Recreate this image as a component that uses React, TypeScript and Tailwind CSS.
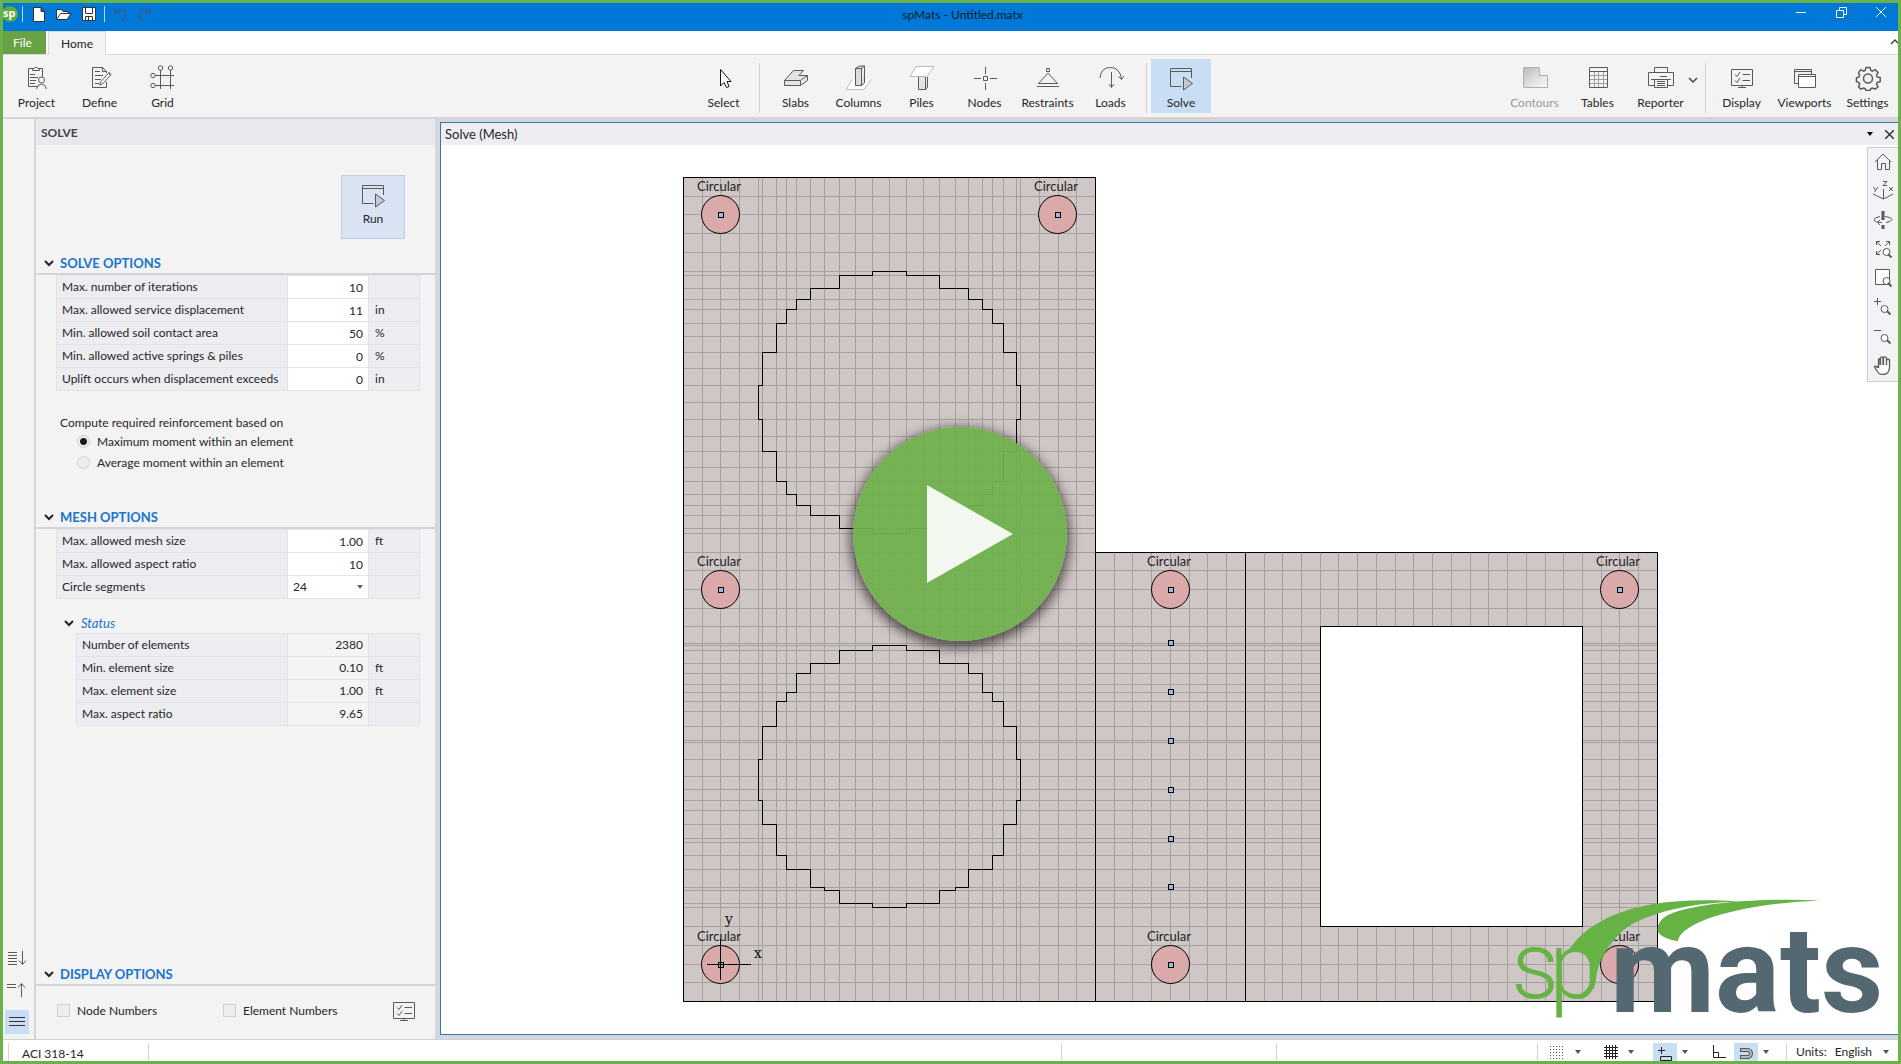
import React from "react";

const xs = [702, 720, 739, 758, 762, 776, 786, 796, 810, 824, 839, 855, 872, 889, 906, 923, 939, 955, 968, 982, 992, 1003, 1016, 1020, 1039, 1058, 1076];
const ysTop = [196, 214, 233, 252, 271, 275, 288, 299, 309, 323, 336, 352, 368, 385, 402, 419, 436, 451, 467, 481, 494, 505, 515, 528, 533, 552];
const ysLow = [570, 589, 608, 626, 643, 645, 650, 663, 673, 684, 692, 701, 711, 726, 740, 742, 759, 776, 789, 800, 810, 824, 838, 842, 855, 869, 887, 890, 903, 907, 926, 945, 964, 982];
const xsRight = Array.from({ length: 29 }, (_, i) => Math.floor(1095.5 + (i + 1) * 18.73));
const columns = [
  [720, 214], [1057, 214], [720, 589], [1170, 589], [1619, 589], [720, 964], [1170, 964], [1619, 964],
];
const nodes = [642, 691, 740, 789, 838, 886];

function MeshCanvas() {
  const grid =
    xs.map((x) => `M${x} 177V1001`).join("") +
    ysTop.map((y) => `M683 ${y}H1095`).join("") +
    ysLow.map((y) => `M683 ${y}H1657`).join("") +
    xsRight.map((x) => `M${x} 552V1001`).join("");
  return (
    <svg viewBox="441 145 1457 889" className="h-full w-full" role="img" aria-label="Mesh view">
      <g transform="translate(.5 .5)" shapeRendering="crispEdges" fill="none" stroke="#000">
        <path d="M683 177H1095V552H1657V1001H683Z" fill="#cfc7c6" stroke="none" />
        <path d={grid} stroke="#a4a09f" />
        <path d="M1320 626H1582V926H1320Z" fill="#fff" />
        <path d="M683 177H1095V552H1657V1001H683Z M1095 552V1001 M1245 552V1001" />
        <path d="M872 271H906V275H939V288H968V299H982V309H992V323H1003V352H1016V385H1020V419H1016V451H1003V481H992V494H982V505H968V515H939V528H906V533H872V528H839V515H810V505H796V494H786V481H776V451H762V419H758V385H762V352H776V323H786V309H796V299H810V288H839V275H872Z" />
        <path d="M872 645H906V650H939V663H968V673H982V692H992V701H1003V726H1016V759H1020V800H1016V824H1003V855H992V869H968V887H955V890H939V903H906V907H872V903H839V890H824V887H810V869H786V855H776V824H762V800H758V759H762V726H776V701H786V692H796V673H810V663H839V650H872Z" />
        {columns.map(([x, y]) => (
          <g key={`${x}-${y}`}>
            <circle cx={x} cy={y} r="19" fill="#d9aaa9" shapeRendering="auto" />
            <rect x={x - 2} y={y - 2} width="5" height="5" fill="#9db9e0" />
          </g>
        ))}
        {nodes.map((y) => (
          <rect key={y} x="1168" y={y - 2} width="5" height="5" fill="#9db9e0" />
        ))}
        <path d="M706 964H750M720 938V979" />
      </g>
      <g className="text-[13px]" fill="#222">
        {columns.map(([x, y]) => (
          <text key={`${x}-${y}`} x={x - 1} y={y - 23} textAnchor="middle">Circular</text>
        ))}
      </g>
      <g className="font-['DejaVu_Serif',serif] text-[14px]" fill="#111">
        <text x="725" y="924">y</text>
        <text x="754" y="958">x</text>
      </g>
    </svg>
  );
}

function Logo() {
  return (
    <svg viewBox="60 0 1170 470" className="h-full w-full" role="img" aria-label="spMats">
      <path fill="#66b245" d="M270 204C330 118 460 58 680 60C715 60 750 61 775 65C650 66 500 95 430 150C375 200 352 250 342 325L329 325V242C327 222 312 210 285 205Z" />
      <path fill="#66b245" d="M1017 62C900 54 690 60 580 98C545 110 531 130 533 153C540 168 565 178 594 183C598 155 640 130 700 110C790 82 900 66 1017 62Z" />
      <g className="font-['Roboto',sans-serif] font-light" fill="#66b245" fontSize="282">
        <text x="94" y="355">s</text>
        <text x="208" y="355">p</text>
      </g>
      <text x="390" y="396" fontSize="364" fill="#546872" className="font-['Roboto',sans-serif] font-bold">mats</text>
    </svg>
  );
}

function Icon({ children, w = 26, h = 26 }: { children: React.ReactNode; w?: number; h?: number }) {
  return (
    <svg width={w} height={h} viewBox={`0 0 ${w} ${h}`} fill="none" stroke="#5a5a5a" strokeWidth="1" aria-hidden="true" className="shrink-0">
      {children}
    </svg>
  );
}

const RunIcon = () => (
  <Icon>
    <path d="M13.500 21.500H2.500V3.500H23.500V13M2.500 6.500H23.500" />
    <path d="M15.500 12L24.500 18.500L15.500 25Z" fill="#c6c8cc" />
  </Icon>
);
const MonitorIcon = () => (
  <Icon>
    <path d="M2.500 4.500H23.500V20.500H2.500ZM13 20.500V22.500M9 22.500H17M13.500 9.500H21M13.500 15.500H21M6 9.500L8 11.500L11 7M6 15.500L8 17.500L11 13" />
  </Icon>
);

const ribbonIcons: Record<string, React.ReactNode> = {
  Project: (
    <Icon>
      <path d="M9 3.500H4.500V21.500H13M15 3.500H18.500V12M8.500 5.500V3.500H10Q12 .5 14 3.500H15.500V5.500ZM6 9.500H11M6 12.500H14M6 15.500H12M6 18.500H11" />
      <circle cx="17.500" cy="15" r="3" />
      <path d="M12.500 24Q13 19.500 17.500 19Q22 19.500 22.500 24" />
    </Icon>
  ),
  Define: (
    <Icon>
      <path d="M19.500 17V22.500H5.500V2.500H15.500L19.500 6.500V8M15.500 2.500V6.500H19.500M8 6.500H13M8 10.500H16M8 14.500H14M8 18.500H12" />
      <path d="M12.500 20L14 16.500L22 7.500L24 9.500L16 18.500ZM22 7.500L23 10" fill="#fff" />
    </Icon>
  ),
  Grid: (
    <Icon>
      <path d="M10.500 5V24M20.500 5V24M5 10.500H24M5 20.500H24" />
      <circle cx="10.500" cy="3" r="2.200" /><circle cx="20.500" cy="3" r="2.200" />
      <circle cx="3" cy="10.500" r="2.200" /><circle cx="3" cy="20.500" r="2.200" />
    </Icon>
  ),
  Select: (
    <Icon>
      <path d="M9.500 4.500V21L13 17.500L15.500 22.500L18 21.500L16 16.500H20Z" fill="#fff" stroke="#111" />
    </Icon>
  ),
  Slabs: (
    <Icon>
      <path d="M1.500 15.500H17.500V20.500H1.500ZM1.500 15.500L10.500 5.500H20.500L16 10.500H24.500L17.500 15.500M24.500 10.500V15.500L17.500 20.500" fill="#e3e3e3" />
    </Icon>
  ),
  Columns: (
    <Icon>
      <path d="M6 14.500L0 24.500H18L25 14.500" fill="#fff" stroke="#bbb" />
      <path d="M9.500 3.500H15.500V20.500H9.500ZM9.500 3.500L13 1H18.500L15.500 3.500M18.500 1V18L15.500 20.500" fill="#dcdcdc" />
    </Icon>
  ),
  Piles: (
    <Icon>
      <path d="M9.500 12V24.500H16.500V12M16.500 24.500L18.500 22V12" fill="#e3e3e3" />
      <path d="M1 11.500L7 1.500H25L18 11.500Z" fill="#fff" stroke="#bbb" />
    </Icon>
  ),
  Nodes: (
    <Icon>
      <path d="M11.500 11.500H15.500V15.500H11.500ZM13.500 2V9M13.500 18V25M2 13.500H9M18 13.500H25" />
    </Icon>
  ),
  Restraints: (
    <Icon>
      <path d="M11.500 3.500H14.500V6.500H11.500ZM13 8L3.500 18.500H22.500ZM2 21.500H24" />
    </Icon>
  ),
  Loads: (
    <Icon>
      <path d="M2 13Q3 2.500 12.500 2.500Q22 2.500 23.500 14M20.500 11.500L23.500 14.500L26 11M13.500 7V22M11 19L13.500 22.500L16 19" />
    </Icon>
  ),
  Solve: <RunIcon />,
  Contours: (
    <Icon>
      <defs>
        <linearGradient id="contour" x1="0" y1="0" x2="1" y2="1">
          <stop offset="0" stopColor="#b8b8b8" /><stop offset=".6" stopColor="#e4e4e4" /><stop offset="1" stopColor="#fafafa" />
        </linearGradient>
      </defs>
      <path d="M1.500 2.500H17.500V10.500H25.500V22.500H1.500Z" fill="url(#contour)" stroke="#b0b0b0" />
    </Icon>
  ),
  Tables: (
    <Icon>
      <path d="M4.500 2.500H22.500V22.500H4.500ZM4.500 6.500H22.500" />
      <path d="M5 10.500H22M5 14.500H22M5 18.500H22M9.500 7V22M13.500 7V22M18.500 7V22" stroke="#a0a0a0" />
    </Icon>
  ),
  Reporter: (
    <Icon>
      <path d="M6.500 7V2.500H19.500V7M6 20.500H.5V7.500H25.500V20.500H20M6.500 14.500H19.500V22.500H6.500ZM3 14.500H23M9 16.500H17M9 18.500H17M9 20.500H17M12 11.500H19" />
    </Icon>
  ),
  Display: <MonitorIcon />,
  Viewports: (
    <Icon>
      <path d="M2.500 4.500H19.500V18.500H2.500ZM2.500 6.500H19.500" fill="#eee" />
      <path d="M6.500 9.500H23.500V22.500H6.500ZM6.500 11.500H23.500" fill="#fff" />
    </Icon>
  ),
  Settings: (
    <Icon>
      <g strokeWidth="1.500">
        <path d="M11 2.500h4l.8 3 1.700.7 2.700-1.500 2.800 2.800-1.500 2.700.7 1.700 3 .8v4l-3 .8-.7 1.700 1.500 2.700-2.800 2.300-2.700-1.200-1.700.7-.8 1.800h-4l-.8-1.800-1.700-.7-2.700 1.200-2.300-2.300 1.200-2.700-.7-1.700-2.500-.8v-4l2.500-.8.7-1.700-1.200-2.700 2.300-2.800 2.700 1.500 1.700-.7z" />
        <circle cx="13" cy="13.500" r="4.500" />
      </g>
    </Icon>
  ),
};

function RibbonButton({ name, active, muted }: { name: string; active?: boolean; muted?: boolean }) {
  const base = "flex h-[54px] flex-col items-center justify-between pt-[6px] pb-px leading-[18px] ";
  const tone = active ? "w-[60px] bg-[#c9def5]" : muted ? "w-[63px] text-[#9b9b9b]" : "w-[63px]";
  return (
    <button className={base + tone}>
      {ribbonIcons[name]}
      <span>{name}</span>
    </button>
  );
}

function Chevron({ dark }: { dark?: boolean }) {
  return (
    <svg width="10" height="8" viewBox="0 0 10 8" fill="none" stroke={dark ? "#222" : "#444"} strokeWidth={dark ? 2 : 1.5} aria-hidden="true">
      <path d="M1 2L5 6L9 2" />
    </svg>
  );
}

function Caret() {
  return (
    <svg width="6" height="4" viewBox="0 0 6 4" fill="currentColor" aria-hidden="true" className="shrink-0"><path d="M0 0H6L3 4Z" /></svg>
  );
}

function SectionHeader({ children }: { children: React.ReactNode }) {
  return (
    <h2 className="border-b-2 border-[#d5d5d7] text-[13px] font-bold text-[#1874cd]">
      <button className="flex h-5 w-full items-center gap-[6px] pl-2">
        <Chevron dark />
        {children}
      </button>
    </h2>
  );
}

type Row = { label: string; value: string; unit?: string; kind?: "select" | "output" };

function OptionTable({ rows, name }: { rows: Row[]; name: string }) {
  return (
    <table className="w-full table-fixed border-separate border-spacing-0 border border-b-0 border-[#e3e3e7] bg-[#ededf1]" aria-label={name}>
      <colgroup>
        <col />
        <col className="w-[81px]" />
        <col className="w-[50px]" />
      </colgroup>
      <tbody>
        {rows.map((r) => {
          const id = r.label.toLowerCase().replace(/[^a-z]+/g, "-");
          return (
            <tr key={r.label} className="h-[23px]">
              <th scope="row" className="border-r border-b border-[#e3e3e7] p-0 pl-[5px] text-left font-normal whitespace-nowrap">
                <label htmlFor={id}>{r.label}</label>
              </th>
              <td className={r.kind === "output" ? "border-r border-b border-[#e3e3e7] bg-[#f4f4f5] p-0" : "border-r border-b border-[#e3e3e7] bg-white p-0"}>
                {r.kind === "output" ? (
                  <output id={id} className="block pr-[5px] text-right">{r.value}</output>
                ) : r.kind === "select" ? (
                  <div className="flex items-center pr-[5px]">
                    <select id={id} defaultValue={r.value} className="h-[22px] w-full appearance-none bg-transparent pl-[5px] outline-none">
                      <option>12</option>
                      <option>24</option>
                      <option>36</option>
                    </select>
                    <span className="text-[#666]"><Caret /></span>
                  </div>
                ) : (
                  <input id={id} defaultValue={r.value} className="block h-[22px] w-full bg-transparent pr-[5px] text-right outline-none" />
                )}
              </td>
              <td className="border-b border-[#e3e3e7] p-0 pl-[6px]">{r.unit}</td>
            </tr>
          );
        })}
      </tbody>
    </table>
  );
}

function TitleBar() {
  return (
    <header className="grid h-7 shrink-0 grid-cols-[1fr_auto_1fr] bg-[#0078d7]">
      <div className="flex items-start pt-px">
        <svg width="150" height="22" viewBox="0 0 150 22" fill="none" aria-hidden="true">
          <circle cx="7" cy="10" r="8" fill="#5cab3b" />
          <text x="0" y="13" fontSize="11" fill="#fff" className="font-['Open_Sans'] font-bold">sp</text>
          <path d="M19.500 2V18M101.500 2V18" stroke="#c9d6e2" />
          <path d="M30.500 3.500H38L41.500 7.500V17.500H30.500ZM38 3.500V7.500H41.500" fill="#fff" stroke="#333" />
          <path d="M53.500 15.500V5.500H58L60 7.500H65V10" fill="#fff" stroke="#333" />
          <path d="M53.500 15.500L57.500 9.500H68L64 15.500Z" fill="#fff" stroke="#333" />
          <path d="M79.500 3.500H92.500V16.500H79.500Z" fill="#fff" stroke="#333" />
          <path d="M82.500 4V9.500H89.500V4M82.500 16V12.500H89.500V16M85.500 13V16" stroke="#333" />
          <path d="M112 4V9H117M112 9Q116 4 120 6Q125 10 119 17" stroke="#2a62a0" strokeWidth="2" />
          <path d="M147 4V9H142M147 9Q143 4 139 6Q134 10 140 17" stroke="#2a62a0" strokeWidth="2" />
        </svg>
      </div>
      <h1 className="pt-[3px] pl-6 text-[12px] leading-[18px] text-[#0b1a2a]">spMats - Untitled.matx</h1>
      <div className="flex justify-end gap-2 pr-px text-white">
        <button aria-label="Minimize" className="flex h-[18px] w-8 items-center justify-center">
          <svg width="10" height="10" stroke="currentColor"><path d="M0 5.500H10" /></svg>
        </button>
        <button aria-label="Restore" className="flex h-[18px] w-8 items-center justify-center">
          <svg width="11" height="11" stroke="currentColor" fill="none"><path d="M.5 3.500H7.500V10.500H.5ZM3.500 3V.5H10.500V7.500H8" /></svg>
        </button>
        <button aria-label="Close" className="flex h-[18px] w-8 items-center justify-center">
          <svg width="10" height="10" stroke="currentColor"><path d="M0 0L10 10M10 0L0 10" /></svg>
        </button>
      </div>
    </header>
  );
}

const Divider = () => <span className="h-[50px] w-px bg-[#d0d0d0]" />;

function Ribbon() {
  return (
    <>
      <nav className="flex h-6 shrink-0 border-b border-[#d9d9d9] bg-white leading-[22px]">
        <button className="h-[23px] w-[43px] bg-[#67a344] pr-1 text-white">File</button>
        <button className="ml-0.5 h-6 w-[58px] border border-b-0 border-[#d9d9d9] bg-[#f3f3f3]">Home</button>
        <button aria-label="Collapse ribbon" className="-mr-1 ml-auto rotate-180 px-0.5"><Chevron /></button>
      </nav>
      <div className="grid h-[62px] shrink-0 grid-cols-[1fr_auto_1fr] bg-[#f3f3f3] pt-1">
        <div className="flex pl-0.5">
          <RibbonButton name="Project" />
          <RibbonButton name="Define" />
          <RibbonButton name="Grid" />
        </div>
        <div className="flex pl-0.5">
          <RibbonButton name="Select" />
          <div className="flex items-center px-1"><Divider /></div>
          <RibbonButton name="Slabs" />
          <RibbonButton name="Columns" />
          <RibbonButton name="Piles" />
          <RibbonButton name="Nodes" />
          <RibbonButton name="Restraints" />
          <RibbonButton name="Loads" />
          <div className="flex items-center px-1"><Divider /></div>
          <RibbonButton name="Solve" active />
        </div>
        <div className="-mr-px flex justify-end">
          <RibbonButton name="Contours" muted />
          <RibbonButton name="Tables" />
          <RibbonButton name="Reporter" />
          <button aria-label="Reporter options" className="-ml-1 pb-4"><Chevron /></button>
          <div className="flex items-center pr-1 pl-[7px]"><Divider /></div>
          <RibbonButton name="Display" />
          <RibbonButton name="Viewports" />
          <RibbonButton name="Settings" />
        </div>
      </div>
    </>
  );
}

function Rail() {
  return (
    <aside className="flex w-[31px] shrink-0 flex-col justify-end gap-2 bg-[#f3f3f3] pb-[5px] pl-0.5">
      <button aria-label="Expand all" className="flex size-6 items-center justify-center">
        <Icon w={20} h={16}><path d="M1 2.500H10M1 5.500H10M1 8.500H10M1 11.500H10M1 14.500H10M15.500 1V14M12 10.500L15.500 14.500L19 10.500" /></Icon>
      </button>
      <button aria-label="Collapse all" className="flex size-6 items-center justify-center">
        <Icon w={20} h={16}><path d="M0 2.500H9M0 5.500H9M14.500 15V2M11 5.500L14.500 1.500L18 5.500" /></Icon>
      </button>
      <button aria-label="List view" className="flex size-6 items-center justify-center bg-[#c9def5]">
        <Icon w={16} h={10}><path d="M0 .5H16M0 4.500H16M0 8.500H16" stroke="#333" /></Icon>
      </button>
    </aside>
  );
}

function SolvePanel() {
  return (
    <section className="flex w-[401px] shrink-0 flex-col border-l-2 border-[#d5d5d7] bg-[#f3f3f3]">
      <h2 className="h-[26px] bg-[#e9e9ed] pl-[5px] leading-[28px] font-bold text-[#444]">SOLVE</h2>
      <button className="mt-[30px] mr-[30px] flex size-16 flex-col items-center gap-0.5 self-end border border-[#c5cbdb] bg-[#dae3f3] pt-[6px]">
        <RunIcon />
        Run
      </button>
      <div className="mt-[14px]">
        <SectionHeader>SOLVE OPTIONS</SectionHeader>
        <div className="pr-[15px] pl-[20px]">
          <OptionTable
            name="Solve options"
            rows={[
              { label: "Max. number of iterations", value: "10" },
              { label: "Max. allowed service displacement", value: "11", unit: "in" },
              { label: "Min. allowed soil contact area", value: "50", unit: "%" },
              { label: "Min. allowed active springs & piles", value: "0", unit: "%" },
              { label: "Uplift occurs when displacement exceeds", value: "0", unit: "in" },
            ]}
          />
        </div>
      </div>
      <fieldset className="mt-[23px] pl-6">
        <legend className="float-left h-[17px] w-full leading-[18px]">Compute required reinforcement based on</legend>
        {["Maximum moment within an element", "Average moment within an element"].map((t, i) => (
          <label key={t} className="flex h-[21px] items-center gap-[7px] pl-[17px]">
            <input
              type="radio"
              name="moment"
              defaultChecked={i === 0}
              className="size-[13px] appearance-none rounded-full border border-[#cfcfd4] bg-[#ededf1] checked:bg-[radial-gradient(circle,#1a1a1a_3px,#ededf1_4px)]"
            />
            {t}
          </label>
        ))}
      </fieldset>
      <div className="mt-[34px]">
        <SectionHeader>MESH OPTIONS</SectionHeader>
        <div className="pr-[15px] pl-[20px]">
          <OptionTable
            name="Mesh options"
            rows={[
              { label: "Max. allowed mesh size", value: "1.00", unit: "ft" },
              { label: "Max. allowed aspect ratio", value: "10" },
              { label: "Circle segments", value: "24", kind: "select" },
            ]}
          />
        </div>
        <h3 className="mt-[13px] text-[13px] text-[#1874cd] italic">
          <button className="flex h-[21px] items-center gap-[7px] pl-7 italic"><Chevron dark />Status</button>
        </h3>
        <div className="pr-[15px] pl-10">
          <OptionTable
            name="Status"
            rows={[
              { label: "Number of elements", value: "2380", kind: "output" },
              { label: "Min. element size", value: "0.10", unit: "ft", kind: "output" },
              { label: "Max. element size", value: "1.00", unit: "ft", kind: "output" },
              { label: "Max. aspect ratio", value: "9.65", kind: "output" },
            ]}
          />
        </div>
      </div>
      <div className="mt-auto">
        <SectionHeader>DISPLAY OPTIONS</SectionHeader>
        <div className="flex h-[53px] items-center pr-[18px] pb-1 pl-[21px]">
          {["Node Numbers", "Element Numbers"].map((t) => (
            <label key={t} className="flex w-[166px] items-center gap-[7px]">
              <input type="checkbox" className="size-[13px] appearance-none border border-[#cfcfd4] bg-[#ededf1] checked:bg-[#0f6fc6]" />
              {t}
            </label>
          ))}
          <button aria-label="Display settings" className="ml-auto"><MonitorIcon /></button>
        </div>
      </div>
    </section>
  );
}

const lens = "M15 15L18.500 18.500";
const viewTools: [string, React.ReactNode][] = [
  ["Home view", <path key="a" d="M2 10L10 2L18 10M4.500 8V17.500H8.500V11.500H12.500V17.500H16.500V8" />],
  ["Axes", <g key="a"><path d="M10.500 8V18M10.500 18L0 13M10.500 18L20 13M.5 6L2.500 9.500M5 6L1.500 11M16 6L20 10M20 6L16 10M10 .5H14L10 4.500H14" /></g>],
  ["Rotate", <g key="a"><path d="M10 1V10M10 15V19" strokeWidth="3" /><path d="M7 6.500Q1 7.500 1 10Q2 12.500 9 12.500M7 10L4.500 12.500L7 15M12 6.500Q19 7.500 19 9.500Q18 12 13 12.500" /></g>],
  ["Zoom extents", <g key="a"><path d="M3.500 6V2.500H7M3.500 2.500L8 7M13 2.500H16.500V6M16.500 2.500L12 7M3.500 12V15.500H7M3.500 15.500L8 11" /><circle cx="13.500" cy="13" r="3.500" fill="#fff" /><path d={lens} strokeWidth="2" /></g>],
  ["Zoom window", <g key="a"><path d="M2.500 1.500H16.500V16.500H2.500Z" fill="#fff" /><circle cx="13.500" cy="13" r="3.500" fill="#fff" /><path d={lens} strokeWidth="2" /></g>],
  ["Zoom in", <g key="a"><path d="M4.500 1V8M1 4.500H8" /><circle cx="11.500" cy="12" r="3.500" fill="#fff" /><path d="M14 14L17.500 17.500" strokeWidth="2" /></g>],
  ["Zoom out", <g key="a"><path d="M1 4.500H8" /><circle cx="11.500" cy="12" r="3.500" fill="#fff" /><path d="M14 14L17.500 17.500" strokeWidth="2" /></g>],
  ["Pan", <path key="a" d="M5.500 13V5Q5.500 3.500 7 3.500V10M7.500 10V3Q8.500 1 10 2.500V10M10.500 10V2.500Q12 1 13.500 3V10M13.500 5Q15 3.500 16.500 5V13Q15.500 19.500 10 19.500Q6 19.500 4 16L1.500 12Q2 10 5.500 13" fill="#fff" strokeWidth="1.300" />],
];

function Viewport() {
  return (
    <main className="flex min-w-0 flex-1 flex-col bg-[#d5d7db] pt-[3px] pb-1 pl-[5px]">
      <div className="flex min-h-0 flex-1 flex-col border border-r-0 border-[#2f78b4] bg-white">
        <div className="flex h-[22px] shrink-0 items-center gap-3 bg-[#eeeef2] pr-1 pl-1">
          <h2 className="flex-1 text-[13px]">Solve (Mesh)</h2>
          <button aria-label="View menu" className="text-black"><Caret /></button>
          <button aria-label="Close view">
            <svg width="9" height="9" stroke="#333" strokeWidth="1.500"><path d="M0 0L9 9M9 0L0 9" /></svg>
          </button>
        </div>
        <div className="relative min-h-0 flex-1">
          <div className="absolute inset-0"><MeshCanvas /></div>
          <div className="absolute top-0.5 right-0 flex w-[31px] flex-col items-center gap-[9px] border border-r-0 border-[#c9cdd8] bg-[#f3f3f5] pt-1 pb-1.5">
            {viewTools.map(([label, icon]) => (
              <button key={label} aria-label={label}><Icon w={20} h={20}>{icon}</Icon></button>
            ))}
          </div>
          <div className="absolute right-[8px] -bottom-[3px] h-[157px] w-[390px]"><Logo /></div>
        </div>
      </div>
    </main>
  );
}

function StatusBar() {
  return (
    <footer className="flex h-[22px] shrink-0 border-t border-[#cfd0d6] bg-white pt-[3px] leading-[22px]">
      <div className="ml-[5px] w-[141px] border-x border-[#d5d5d7] pl-[13px]">ACI 318-14</div>
      <div className="ml-auto w-[216px] border-x border-[#d5d5d7]" />
      <div className="w-[261px] border-r border-[#d5d5d7]" />
      <div className="flex w-[249px] items-center border-r border-[#d5d5d7] pl-3 text-[#555]">
        <button aria-label="Grid points" className="w-[25px]"><Icon w={14} h={14}><path d="M0 1.500H14M0 4.500H14M0 7.500H14M0 10.500H14M0 13.500H14" strokeDasharray="1 2" /></Icon></button>
        <span className="w-[29px]"><Caret /></span>
        <button aria-label="Grid lines" className="w-[24px]"><Icon w={14} h={14}><path d="M0 2.500H14M0 5.500H14M0 8.500H14M0 11.500H14M2.500 0V14M5.500 0V14M8.500 0V14M11.500 0V14" stroke="#222" /></Icon></button>
        <span className="w-[25px]"><Caret /></span>
        <button aria-label="Snap" className="flex h-full w-6 justify-center bg-[#c9def5] pt-1"><Icon w={14} h={14}><path d="M3.500 0V7M0 3.500H7M2.500 9.500H13.500V13.500H2.500Z" stroke="#222" /></Icon></button>
        <span className="w-9 pl-[5px]"><Caret /></span>
        <button aria-label="Ortho" className="w-[21px]"><Icon w={14} h={14}><path d="M.5 0V12.500H13M.5 7.500H5.500V12" stroke="#222" /></Icon></button>
        <button aria-label="Magnet" className="flex h-full w-6 justify-center bg-[#c9def5] pt-1"><Icon w={15} h={14}><path d="M1 3H8.500A3.500 3.500 0 0 1 8.500 10H1" strokeWidth="4" stroke="#555" /><path d="M2 3H8.500A3.500 3.500 0 0 1 8.500 10H2" strokeWidth="2" stroke="#bbb" /></Icon></button>
        <span className="pl-[5px]"><Caret /></span>
      </div>
      <label className="flex w-[111px] items-center gap-2 pl-[9px]">
        Units:
        <select className="w-[40px] appearance-none bg-transparent outline-none" defaultValue="English">
          <option>English</option>
          <option>Metric</option>
        </select>
        <span className="text-[#555]"><Caret /></span>
      </label>
    </footer>
  );
}

export default function App() {
  return (
    <div className="relative flex h-screen flex-col overflow-hidden border-[3px] border-[#6cb24a] bg-[#f3f3f3] font-['Lato','Open_Sans',sans-serif] text-[12px] leading-[18px] text-[#262626]">
      <TitleBar />
      <Ribbon />
      <div className="flex min-h-0 flex-1 border-t-2 border-[#d5d5d7]">
        <Rail />
        <SolvePanel />
        <Viewport />
      </div>
      <StatusBar />
      <button
        aria-label="Play video"
        className="absolute top-[424px] left-[850px] flex size-[214px] items-center justify-center rounded-full bg-[#6fb14e]/95 shadow-[0_4px_12px_3px_rgba(40,30,30,0.7)]"
      >
        <svg width="86" height="98" viewBox="0 0 86 98" className="ml-5" aria-hidden="true"><path d="M0 0L86 49L0 98Z" fill="#f2f7ef" /></svg>
      </button>
    </div>
  );
}
